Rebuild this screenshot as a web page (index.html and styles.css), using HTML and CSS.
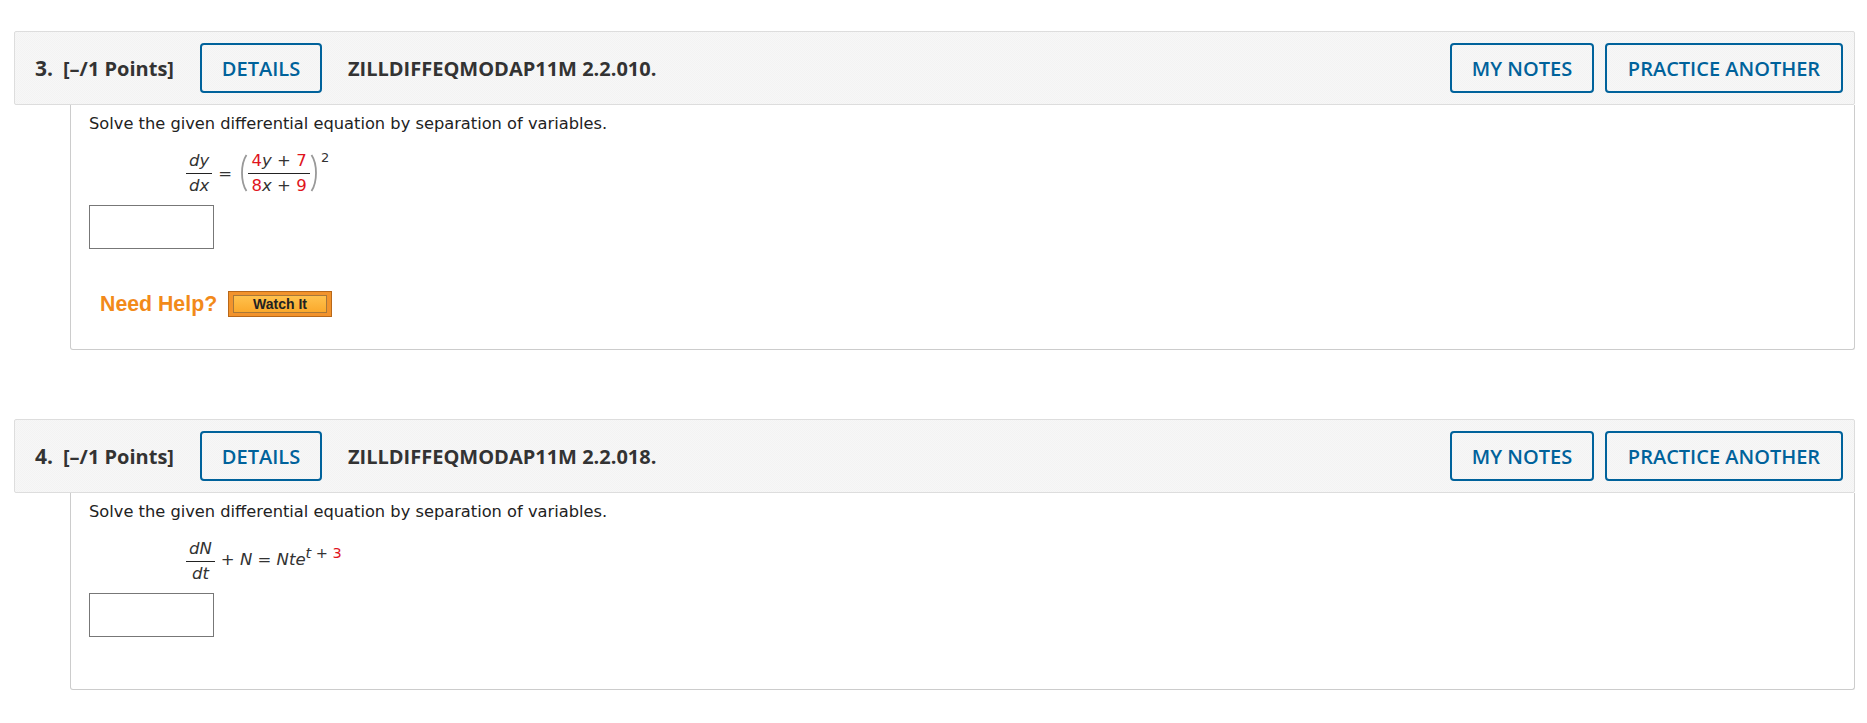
FILE: index.html
```html
<!DOCTYPE html>
<html lang="en">

<head>
    <meta charset="UTF-8">
    <title>Assignment Questions</title>
    <link rel="stylesheet" href="styles.css">
</head>

<body>
    <section class="question">
        <header class="q-header">
            <span class="q-num">3.</span>
            <span class="q-points">[&ndash;/1 Points]</span>
            <a class="btn btn-details">DETAILS</a>
            <span class="q-code">ZILLDIFFEQMODAP11M 2.2.010.</span>
            <a class="btn btn-notes">MY NOTES</a>
            <a class="btn btn-practice">PRACTICE ANOTHER</a>
        </header>
        <div class="q-body q-body-help">
            <p class="q-text">Solve the given differential equation by separation of variables.</p>
            <div class="math">
                <span class="frac frac-first"><i>dy</i><i>dx</i></span>
                <span class="op-eq">=</span>
                <svg class="paren" width="9" height="38" viewBox="0 0 9 38"><path d="M7.5 1 C1.5 10 1.5 28 7.5 37" fill="none" stroke="#999" stroke-width="1.8"/></svg>
                <span class="frac frac-wide">
                    <span><b class="red">4</b><i>y</i> + <b class="red">7</b></span>
                    <span><b class="red">8</b><i>x</i> + <b class="red">9</b></span>
                </span>
                <svg class="paren" width="9" height="38" viewBox="0 0 9 38"><path d="M1.5 1 C7.5 10 7.5 28 1.5 37" fill="none" stroke="#999" stroke-width="1.8"/></svg>
                <sup class="power">2</sup>
            </div>
            <input class="answer" type="text">
            <div class="help">
                <span class="help-label">Need Help?</span>
                <a class="watch"><span class="watch-inner">Watch It</span></a>
            </div>
        </div>
    </section>

    <section class="question">
        <header class="q-header">
            <span class="q-num">4.</span>
            <span class="q-points">[&ndash;/1 Points]</span>
            <a class="btn btn-details">DETAILS</a>
            <span class="q-code">ZILLDIFFEQMODAP11M 2.2.018.</span>
            <a class="btn btn-notes">MY NOTES</a>
            <a class="btn btn-practice">PRACTICE ANOTHER</a>
        </header>
        <div class="q-body q-body-plain">
            <p class="q-text">Solve the given differential equation by separation of variables.</p>
            <div class="math">
                <span class="frac frac-first"><i>dN</i><i>dt</i></span>
                <span class="expr">+ <i>N</i> = <i>Nte</i><sup class="exp"><i>t</i> + <b class="red">3</b></sup></span>
            </div>
            <input class="answer" type="text">
        </div>
    </section>
</body>

</html>
```

FILE: styles.css
```css
html,
body {
    margin: 0;
    background: white;
}

body {
    padding: 31px 12px 0 14px;
    font-family: 'DejaVu Sans', sans-serif;
    color: #222;
}

.question {
    margin-bottom: 69px;
}

/* Header bar */
.q-header {
    display: flex;
    align-items: center;
    height: 74px;
    box-sizing: border-box;
    padding: 0 11px 0 20px;
    background: repeating-conic-gradient(#f3f3f3 0 25%, #f7f7f7 0 50%) 0 0 / 2px 2px;
    border: 1px solid #ddd;
    border-radius: 2px;
    font-family: 'Open Sans', sans-serif;
    font-size: 20px;
    color: #333;
}

.q-num {
    font-weight: 700;
    font-size: 21px;
    width: 28px;
}

.q-points {
    font-weight: 700;
    width: 137px;
}

.q-code {
    font-weight: 700;
    margin-left: 26px;
    margin-right: auto;
}

.btn {
    display: flex;
    align-items: center;
    justify-content: center;
    height: 50px;
    box-sizing: border-box;
    border: 2px solid #00629b;
    border-radius: 4px;
    color: #00629b;
    font-weight: 600;
}

.btn-details {
    width: 122px;
}

.btn-notes {
    width: 144px;
}

.btn-practice {
    width: 238px;
    margin-left: 11px;
}

/* Question body */
.q-body {
    margin-left: 56px;
    padding: 0 0 0 18px;
    box-sizing: border-box;
    border: 1px solid #ccc;
    border-top: none;
    border-radius: 0 0 3px 3px;
}

.q-body-help {
    height: 245px;
}

.q-body-plain {
    height: 197px;
}

.q-text {
    margin: 0;
    padding-top: 10px;
    font-size: 16.25px;
    line-height: 18px;
    color: #222;
}

.math {
    display: flex;
    align-items: center;
    height: 58px;
    margin: 11px 0 3px 97px;
    font-size: 16.5px;
    color: #333;
}

.frac {
    display: flex;
    flex-direction: column;
    align-items: center;
    line-height: 24px;
}

.frac > :first-child {
    border-bottom: 1px solid #222;
    padding: 0 3px;
    align-self: stretch;
    text-align: center;
}

.frac-wide {
    width: 62px;
}

.frac-wide > :first-child {
    padding: 0;
}

.frac-wide span {
    white-space: pre;
}

.op-eq {
    margin: 0 7px 0 6px;
}

.paren {
    flex: none;
}

.power {
    font-size: 13px;
    align-self: flex-start;
    margin: 7px 0 0 2px;
    line-height: 14px;
}

.expr {
    margin: 0 0 3px 6px;
    white-space: pre;
}

.exp {
    font-size: 14.5px;
    line-height: 0;
    vertical-align: 7px;
}

.red {
    color: #e0141c;
    font-weight: normal;
}

.answer {
    display: block;
    width: 125px;
    height: 44px;
    box-sizing: border-box;
    border: 1px solid #777;
    padding: 0;
    background: white;
}

/* Need Help row */
.help {
    display: flex;
    align-items: center;
    margin: 42px 0 0 11px;
}

.help-label {
    font-family: 'Liberation Sans', sans-serif;
    font-size: 21.3px;
    font-weight: bold;
    color: #f28a1a;
    width: 128px;
}

.watch {
    display: block;
    width: 104px;
    height: 26px;
    box-sizing: border-box;
    padding: 3px 4px 3px 4px;
    background: #f2932c;
    border: 1px solid #b8681a;
}

.watch-inner {
    display: block;
    height: 100%;
    box-sizing: border-box;
    border: 1px solid #a8783a;
    background: linear-gradient(#ffc14d, #fba92c);
    font-family: 'Liberation Sans', sans-serif;
    font-size: 14px;
    font-weight: bold;
    line-height: 16px;
    text-align: center;
    color: #222;
}
```
